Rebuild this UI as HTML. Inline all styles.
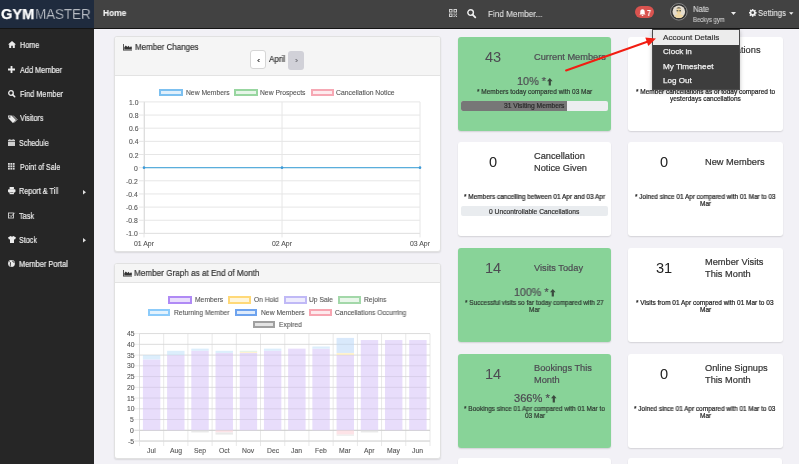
<!DOCTYPE html>
<html><head><meta charset="utf-8">
<style>
*{box-sizing:border-box;margin:0;padding:0}
html,body{width:799px;height:464px;overflow:hidden}
body{position:relative;background:#f2f1f6;font-family:"Liberation Sans",sans-serif;color:#333}
.abs{position:absolute}
.t{position:absolute;white-space:nowrap;line-height:1;transform-origin:0 0;will-change:transform;-webkit-text-stroke:0.2px currentColor}
svg{position:absolute;overflow:visible}
</style></head><body>

<div class="abs" style="left:0px;top:0px;width:799px;height:28px;background:#424242;"></div>
<div class="abs" style="left:0px;top:28px;width:799px;height:1px;background:#141414;"></div>
<div class="abs" style="left:0px;top:0px;width:94px;height:28px;background:#1f2b3e;"></div>
<div class="t" style="left:1.00px;top:5.70px;font-size:15.0px;color:#ffffff;font-weight:bold;transform:scaleX(0.972);-webkit-text-stroke:0.25px #fff;">GYM</div>
<div class="t" style="left:35.20px;top:5.70px;font-size:15.0px;color:#e6e8ec;transform:scaleX(0.890);-webkit-text-stroke:0.4px #1f2b3e;">MASTER</div>
<div class="t" style="left:102.50px;top:8.68px;font-size:9.0px;color:#f4f4f4;font-weight:bold;transform:scaleX(0.932);-webkit-text-stroke:0.1px currentColor;">Home</div>
<svg style="left:449px;top:9px" width="8" height="8" viewBox="0 0 8 8"><g fill="#d0d0d0"><path d="M0 0h3.5v3.5H0z M1 1v1.5h1.5V1z"/><path d="M4.5 0H8v3.5H4.5z M5.5 1v1.5H7V1z"/><path d="M0 4.5h3.5V8H0z M1 5.5V7h1.5V5.5z"/><rect x="4.5" y="4.5" width="1.2" height="1.2"/><rect x="6.8" y="4.5" width="1.2" height="1.2"/><rect x="5.7" y="5.7" width="1.1" height="1.1"/><rect x="4.5" y="6.8" width="1.2" height="1.2"/><rect x="6.8" y="6.8" width="1.2" height="1.2"/></g></svg>
<svg style="left:466.5px;top:9px" width="9" height="9" viewBox="0 0 9 9"><circle cx="3.6" cy="3.6" r="2.8" fill="none" stroke="#f0f0f0" stroke-width="1.4"/><path d="M5.6 5.6L8.3 8.3" stroke="#f0f0f0" stroke-width="1.8" stroke-linecap="round"/></svg>
<div class="t" style="left:487.60px;top:10.18px;font-size:9.0px;color:#e2e2e2;transform:scaleX(0.906);-webkit-text-stroke:0.1px currentColor;">Find Member...</div>
<div class="abs" style="left:635px;top:6.2px;width:19px;height:12.2px;background:#d9534f;border-radius:6.1px;"></div>
<svg style="left:638.5px;top:8.8px" width="7" height="7" viewBox="0 0 7 7"><path d="M3.5 0.3C2 0.3 1.3 1.5 1.3 2.8V4.4L0.4 5.6H6.6L5.7 4.4V2.8C5.7 1.5 5 0.3 3.5 0.3z M2.6 6.1a0.9 0.9 0 0 0 1.8 0z" fill="#fff"/></svg>
<div class="t" style="left:646.90px;top:8.97px;font-size:8.3px;color:#ffffff;font-weight:bold;transform:scaleX(0.845);-webkit-text-stroke:0.1px currentColor;">7</div>
<svg style="left:670px;top:3px" width="18" height="18" viewBox="0 0 18 18"><circle cx="8.8" cy="8.8" r="8.3" fill="#333" stroke="#8e8e8e" stroke-width="0.9"/><circle cx="8.8" cy="8.8" r="6.3" fill="#e4ddd0"/><clipPath id="av"><circle cx="8.8" cy="8.8" r="6.3"/></clipPath><g clip-path="url(#av)"><path d="M3.5 16 Q4 11.2 8.8 11 Q13.6 11.2 14.1 16z" fill="#f0d8a4"/><ellipse cx="8.8" cy="8" rx="2.4" ry="3" fill="#efd49c"/><path d="M6.3 6.8 Q6.4 4.2 8.8 4.1 Q11.2 4.2 11.3 6.8 L10.6 5.6 Q8.8 5.2 7 5.6z" fill="#6f6a5c"/><rect x="6.6" y="7.2" width="1.7" height="1.1" fill="#3e4a4a"/><rect x="9.3" y="7.2" width="1.7" height="1.1" fill="#3e4a4a"/></g></svg>
<div class="t" style="left:692.90px;top:4.72px;font-size:8.6px;color:#dcdcdc;transform:scaleX(0.892);-webkit-text-stroke:0.1px currentColor;">Nate</div>
<div class="t" style="left:692.90px;top:17.41px;font-size:6.6px;color:#cfcfcf;transform:scaleX(0.891);-webkit-text-stroke:0.1px currentColor;">Beckys gym</div>
<svg style="left:730.5px;top:12.2px" width="5" height="3" viewBox="0 0 5 3"><path d="M0 0H5L2.5 3z" fill="#eee"/></svg>
<svg style="left:748.6px;top:8.7px" width="7.4" height="7.4" viewBox="0 0 16 16"><path fill="#f0f0f0" d="M6.6 0h2.8l.4 2.2 1.3.6 1.9-1.3 2 2-1.3 1.9.6 1.3 2.2.4v2.8l-2.2.4-.6 1.3 1.3 1.9-2 2-1.9-1.3-1.3.6-.4 2.2H6.6l-.4-2.2-1.3-.6-1.9 1.3-2-2 1.3-1.9-.6-1.3L0 9.4V6.6l2.2-.4.6-1.3L1.5 3l2-2 1.9 1.3 1.3-.6z M8 5a3 3 0 1 0 0 6a3 3 0 1 0 0-6z"/></svg>
<div class="t" style="left:758.20px;top:7.84px;font-size:9.4px;color:#e8e8e8;transform:scaleX(0.824);-webkit-text-stroke:0.1px currentColor;">Settings</div>
<svg style="left:789.3px;top:12.1px" width="4.5" height="3" viewBox="0 0 5 3"><path d="M0 0H5L2.5 3z" fill="#eee"/></svg>
<div class="abs" style="left:0px;top:29px;width:94px;height:435px;background:#262626;"></div>
<div class="t" style="left:19.70px;top:41.43px;font-size:8.7px;color:#ededed;transform:scaleX(0.836);-webkit-text-stroke:0.2px currentColor;">Home</div>
<div class="t" style="left:19.70px;top:65.73px;font-size:8.7px;color:#ededed;transform:scaleX(0.845);-webkit-text-stroke:0.2px currentColor;">Add Member</div>
<div class="t" style="left:19.70px;top:90.03px;font-size:8.7px;color:#ededed;transform:scaleX(0.841);-webkit-text-stroke:0.2px currentColor;">Find Member</div>
<div class="t" style="left:19.70px;top:114.33px;font-size:8.7px;color:#ededed;transform:scaleX(0.829);-webkit-text-stroke:0.2px currentColor;">Visitors</div>
<div class="t" style="left:18.60px;top:138.63px;font-size:8.7px;color:#ededed;transform:scaleX(0.819);-webkit-text-stroke:0.2px currentColor;">Schedule</div>
<div class="t" style="left:19.70px;top:162.93px;font-size:8.7px;color:#ededed;transform:scaleX(0.817);-webkit-text-stroke:0.2px currentColor;">Point of Sale</div>
<div class="t" style="left:18.60px;top:187.23px;font-size:8.7px;color:#ededed;transform:scaleX(0.834);-webkit-text-stroke:0.2px currentColor;">Report &amp; Till</div>
<div class="t" style="left:18.60px;top:211.53px;font-size:8.7px;color:#ededed;transform:scaleX(0.844);-webkit-text-stroke:0.2px currentColor;">Task</div>
<div class="t" style="left:18.60px;top:235.83px;font-size:8.7px;color:#ededed;transform:scaleX(0.823);-webkit-text-stroke:0.2px currentColor;">Stock</div>
<div class="t" style="left:18.60px;top:260.13px;font-size:8.7px;color:#ededed;transform:scaleX(0.857);-webkit-text-stroke:0.2px currentColor;">Member Portal</div>
<svg style="left:8px;top:40.8px" width="8" height="7" viewBox="0 0 8 7"><path d="M4 0L0 3.6H1.2V7H3.2V4.8H4.8V7H6.8V3.6H8z" fill="#ececec"/></svg>
<svg style="left:8px;top:65.7px" width="7" height="7" viewBox="0 0 7 7"><path d="M2.6 0h1.8v2.6H7v1.8H4.4V7H2.6V4.4H0V2.6h2.6z" fill="#ececec"/></svg>
<svg style="left:8px;top:90.3px" width="7.2" height="7" viewBox="0 0 7.2 7"><circle cx="3" cy="3" r="2.3" fill="none" stroke="#ececec" stroke-width="1.3"/><path d="M4.6 4.6L6.7 6.7" stroke="#ececec" stroke-width="1.6" stroke-linecap="round"/></svg>
<svg style="left:8px;top:114.5px" width="9" height="8" viewBox="0 0 9 8"><path d="M0 0.5h3.6L8 4.9 4.9 8 0.5 3.6z" fill="#ececec"/><circle cx="1.8" cy="1.9" r=".7" fill="#262626"/><path d="M5 0.5L9 4.5 6 7.6" stroke="#ececec" stroke-width=".8" fill="none"/></svg>
<svg style="left:8px;top:138.7px" width="7" height="7" viewBox="0 0 7 7"><rect x="0" y="0.8" width="7" height="6.2" fill="#cfcfcf"/><rect x="0" y="2.4" width="7" height=".6" fill="#262626"/><rect x="1.4" y="0" width=".9" height="1.6" fill="#cfcfcf"/><rect x="4.7" y="0" width=".9" height="1.6" fill="#cfcfcf"/></svg>
<svg style="left:8px;top:163px" width="6.8" height="7" viewBox="0 0 6.8 7"><rect x="0.0" y="0.0" width="1.8" height="1.8" fill="#dcdcdc"/><rect x="2.4" y="0.0" width="1.8" height="1.8" fill="#dcdcdc"/><rect x="4.8" y="0.0" width="1.8" height="1.8" fill="#dcdcdc"/><rect x="0.0" y="2.4" width="1.8" height="1.8" fill="#dcdcdc"/><rect x="2.4" y="2.4" width="1.8" height="1.8" fill="#dcdcdc"/><rect x="4.8" y="2.4" width="1.8" height="1.8" fill="#dcdcdc"/><rect x="0.0" y="4.8" width="1.8" height="1.8" fill="#dcdcdc"/><rect x="2.4" y="4.8" width="1.8" height="1.8" fill="#dcdcdc"/><rect x="4.8" y="4.8" width="1.8" height="1.8" fill="#dcdcdc"/></svg>
<svg style="left:8px;top:187.3px" width="7.5" height="7.2" viewBox="0 0 7.5 7.2"><rect x="1.6" y="0" width="4.3" height="2.4" fill="#ececec"/><rect x="0" y="2.2" width="7.5" height="3.2" rx=".8" fill="#ececec"/><rect x="1.6" y="4.6" width="4.3" height="2.6" fill="#ececec"/><rect x="2.2" y="5.4" width="3.1" height=".5" fill="#262626"/></svg>
<svg style="left:8px;top:212px" width="7" height="6.5" viewBox="0 0 7 6.5"><rect x=".5" y="1" width="5" height="5" fill="none" stroke="#d4d4d4" stroke-width=".9"/><path d="M1.8 3.3L3.1 4.6 6.6 0.8" stroke="#d4d4d4" stroke-width="1" fill="none"/></svg>
<svg style="left:8px;top:236px" width="8" height="7" viewBox="0 0 8 7"><path d="M2.6 0L0 1.6 1 3.6 2 3.2V7H6V3.2L7 3.6 8 1.6 5.4 0Q4 1.2 2.6 0z" fill="#ececec"/></svg>
<svg style="left:8px;top:260.2px" width="7" height="7" viewBox="0 0 7 7"><circle cx="3.5" cy="3.5" r="3.4" fill="#ececec"/><path d="M1.5 1.5Q3 2.6 2.4 4 1.8 5 2.8 6.6 M4.2 0.6Q5 2.2 6.4 2.6" stroke="#262626" stroke-width=".9" fill="none"/></svg>
<svg style="left:82.5px;top:189.60000000000002px" width="3" height="4.4" viewBox="0 0 3 4.4"><path d="M0 0L3 2.2 0 4.4z" fill="#e0e0e0"/></svg>
<svg style="left:82.5px;top:238.20000000000002px" width="3" height="4.4" viewBox="0 0 3 4.4"><path d="M0 0L3 2.2 0 4.4z" fill="#e0e0e0"/></svg>
<div class="abs" style="left:114px;top:36px;width:327px;height:216px;background:#fff;border:1px solid #e1e1e1;border-radius:3px;box-shadow:0 1px 1.5px rgba(0,0,0,.10)"></div>
<div class="abs" style="left:115px;top:37px;width:325px;height:39px;background:#f5f5f5;border-bottom:1px solid #e3e3e3;border-radius:2px 2px 0 0"></div>
<svg style="left:123.2px;top:43.8px" width="9" height="6.5" viewBox="0 0 9 6.5"><path d="M0 0V6.5H9V5.8H0.8V0z" fill="#333"/><path d="M1.3 5.6V3.2L2.8 1.4 4.4 3 5.6 1.8 6.8 3.4 8 2.2 8.8 3V5.6z" fill="#333"/></svg>
<div class="t" style="left:134.50px;top:42.68px;font-size:9.0px;color:#333;transform:scaleX(0.888);">Member Changes</div>
<div class="abs" style="left:250.3px;top:50.4px;width:16.2px;height:19px;background:#fff;border:1px solid #d6d6d6;border-radius:3px;"></div>
<div class="t" style="left:256.90px;top:56.83px;font-size:8.0px;color:#444;transform:scaleX(1.201);">‹</div>
<div class="t" style="left:269.20px;top:55.48px;font-size:9.0px;color:#333;transform:scaleX(0.900);">April</div>
<div class="abs" style="left:287.9px;top:50.8px;width:16.6px;height:18.9px;background:#d1d1d8;border-radius:3px;"></div>
<div class="t" style="left:294.60px;top:56.83px;font-size:8.0px;color:#77777d;transform:scaleX(1.201);">›</div>
<div class="abs" style="left:159px;top:89px;width:23.5px;height:7.2px;background:#e0effb;border:2px solid #7cc0f0"></div>
<div class="t" style="left:185.50px;top:89.78px;font-size:6.75px;color:#555;-webkit-text-stroke:0.1px currentColor;">New Members</div>
<div class="abs" style="left:234px;top:89px;width:23.5px;height:7.2px;background:#e6f5e8;border:2px solid #98d6a0"></div>
<div class="t" style="left:259.50px;top:89.78px;font-size:6.75px;color:#555;-webkit-text-stroke:0.1px currentColor;">New Prospects</div>
<div class="abs" style="left:310.5px;top:89px;width:23.5px;height:7.2px;background:#fdebee;border:2px solid #f6a8b4"></div>
<div class="t" style="left:336.20px;top:89.78px;font-size:6.75px;color:#555;transform:scaleX(1.008);-webkit-text-stroke:0.1px currentColor;">Cancellation Notice</div>
<svg style="left:0;top:0" width="799" height="464"><line x1="139" y1="101.90" x2="420" y2="101.90" stroke="#e6e6e6" stroke-width="1"/><line x1="139" y1="115.05" x2="420" y2="115.05" stroke="#e6e6e6" stroke-width="1"/><line x1="139" y1="128.20" x2="420" y2="128.20" stroke="#e6e6e6" stroke-width="1"/><line x1="139" y1="141.35" x2="420" y2="141.35" stroke="#e6e6e6" stroke-width="1"/><line x1="139" y1="154.50" x2="420" y2="154.50" stroke="#e6e6e6" stroke-width="1"/><line x1="139" y1="167.65" x2="420" y2="167.65" stroke="#e6e6e6" stroke-width="1"/><line x1="139" y1="180.80" x2="420" y2="180.80" stroke="#e6e6e6" stroke-width="1"/><line x1="139" y1="193.95" x2="420" y2="193.95" stroke="#e6e6e6" stroke-width="1"/><line x1="139" y1="207.10" x2="420" y2="207.10" stroke="#e6e6e6" stroke-width="1"/><line x1="139" y1="220.25" x2="420" y2="220.25" stroke="#e6e6e6" stroke-width="1"/><line x1="139" y1="233.40" x2="420" y2="233.40" stroke="#e6e6e6" stroke-width="1"/><line x1="144" y1="101.90" x2="144" y2="237.40" stroke="#e6e6e6" stroke-width="1"/><line x1="282" y1="101.90" x2="282" y2="237.40" stroke="#e6e6e6" stroke-width="1"/><line x1="420" y1="101.90" x2="420" y2="237.40" stroke="#e6e6e6" stroke-width="1"/><line x1="144.5" y1="101.90" x2="144.5" y2="233.40" stroke="#dedede" stroke-width="1"/><line x1="139" y1="233.40" x2="420" y2="233.40" stroke="#e2e2e2" stroke-width="1"/><line x1="144" y1="167.65" x2="420" y2="167.65" stroke="#5aaedc" stroke-width="1.3"/><circle cx="144" cy="167.65" r="1.3" fill="#3d9ad8"/><circle cx="282" cy="167.65" r="1.3" fill="#3d9ad8"/><circle cx="420" cy="167.65" r="1.3" fill="#3d9ad8"/></svg>
<div class="t" style="left:128.75px;top:99.94px;font-size:6.8px;color:#555;-webkit-text-stroke:0.1px currentColor;">1.0</div>
<div class="t" style="left:128.75px;top:113.09px;font-size:6.8px;color:#555;-webkit-text-stroke:0.1px currentColor;">0.8</div>
<div class="t" style="left:128.75px;top:126.24px;font-size:6.8px;color:#555;-webkit-text-stroke:0.1px currentColor;">0.6</div>
<div class="t" style="left:128.75px;top:139.39px;font-size:6.8px;color:#555;-webkit-text-stroke:0.1px currentColor;">0.4</div>
<div class="t" style="left:128.75px;top:152.54px;font-size:6.8px;color:#555;-webkit-text-stroke:0.1px currentColor;">0.2</div>
<div class="t" style="left:134.42px;top:165.69px;font-size:6.8px;color:#555;-webkit-text-stroke:0.1px currentColor;">0</div>
<div class="t" style="left:126.48px;top:178.84px;font-size:6.8px;color:#555;-webkit-text-stroke:0.1px currentColor;">-0.2</div>
<div class="t" style="left:126.48px;top:191.99px;font-size:6.8px;color:#555;-webkit-text-stroke:0.1px currentColor;">-0.4</div>
<div class="t" style="left:126.48px;top:205.14px;font-size:6.8px;color:#555;-webkit-text-stroke:0.1px currentColor;">-0.6</div>
<div class="t" style="left:126.48px;top:218.29px;font-size:6.8px;color:#555;-webkit-text-stroke:0.1px currentColor;">-0.8</div>
<div class="t" style="left:126.48px;top:231.44px;font-size:6.8px;color:#555;-webkit-text-stroke:0.1px currentColor;">-1.0</div>
<div class="t" style="left:134.00px;top:240.84px;font-size:6.8px;color:#555;transform:scaleX(1.017);-webkit-text-stroke:0.1px currentColor;">01 Apr</div>
<div class="t" style="left:272.00px;top:240.84px;font-size:6.8px;color:#555;transform:scaleX(1.017);-webkit-text-stroke:0.1px currentColor;">02 Apr</div>
<div class="t" style="left:410.00px;top:240.84px;font-size:6.8px;color:#555;transform:scaleX(1.017);-webkit-text-stroke:0.1px currentColor;">03 Apr</div>
<div class="abs" style="left:114px;top:262.5px;width:327px;height:196px;background:#fff;border:1px solid #e1e1e1;border-radius:3px;box-shadow:0 1px 1.5px rgba(0,0,0,.10)"></div>
<div class="abs" style="left:115px;top:263.5px;width:325px;height:19.5px;background:#f5f5f5;border-bottom:1px solid #e3e3e3;border-radius:2px 2px 0 0"></div>
<svg style="left:123.2px;top:270.0px" width="9" height="6.5" viewBox="0 0 9 6.5"><path d="M0 0V6.5H9V5.8H0.8V0z" fill="#333"/><path d="M1.3 5.6V3.2L2.8 1.4 4.4 3 5.6 1.8 6.8 3.4 8 2.2 8.8 3V5.6z" fill="#333"/></svg>
<div class="t" style="left:134.40px;top:268.68px;font-size:9.0px;color:#333;transform:scaleX(0.906);">Member Graph as at End of Month</div>
<div class="abs" style="left:168px;top:296.4px;width:23.5px;height:7.2px;background:#e9defc;border:2px solid #b08af5"></div>
<div class="t" style="left:194.50px;top:297.28px;font-size:6.75px;color:#555;-webkit-text-stroke:0.1px currentColor;">Members</div>
<div class="abs" style="left:227.7px;top:296.4px;width:23.30000000000001px;height:7.2px;background:#fff6dc;border:2px solid #ffd978"></div>
<div class="t" style="left:253.60px;top:297.28px;font-size:6.75px;color:#555;transform:scaleX(0.981);-webkit-text-stroke:0.1px currentColor;">On Hold</div>
<div class="abs" style="left:283.8px;top:296.4px;width:23.399999999999977px;height:7.2px;background:#eeecfd;border:2px solid #c0b9f6"></div>
<div class="t" style="left:309.40px;top:297.28px;font-size:6.75px;color:#555;transform:scaleX(0.991);-webkit-text-stroke:0.1px currentColor;">Up Sale</div>
<div class="abs" style="left:338.3px;top:296.4px;width:22.599999999999966px;height:7.2px;background:#e9f6ea;border:2px solid #a3d8a9"></div>
<div class="t" style="left:363.80px;top:297.28px;font-size:6.75px;color:#555;transform:scaleX(0.986);-webkit-text-stroke:0.1px currentColor;">Rejoins</div>
<div class="abs" style="left:148px;top:308.7px;width:22.19999999999999px;height:7.2px;background:#e3f2fd;border:2px solid #8ccbfa"></div>
<div class="t" style="left:173.60px;top:309.58px;font-size:6.75px;color:#555;transform:scaleX(0.991);-webkit-text-stroke:0.1px currentColor;">Returning Member</div>
<div class="abs" style="left:235.3px;top:308.7px;width:22.099999999999966px;height:7.2px;background:#dfebfb;border:2px solid #6ea3ee"></div>
<div class="t" style="left:260.90px;top:309.58px;font-size:6.75px;color:#555;-webkit-text-stroke:0.1px currentColor;">New Members</div>
<div class="abs" style="left:309.4px;top:308.7px;width:22.600000000000023px;height:7.2px;background:#fde9ec;border:2px solid #f7a5b1"></div>
<div class="t" style="left:335.30px;top:309.58px;font-size:6.75px;color:#555;transform:scaleX(0.992);-webkit-text-stroke:0.1px currentColor;">Cancellations Occurring</div>
<div class="abs" style="left:253.2px;top:320.7px;width:22.1px;height:7.2px;background:#e4e4e4;border:2px solid #a0a0a0"></div>
<div class="t" style="left:278.70px;top:321.58px;font-size:6.75px;color:#555;transform:scaleX(0.987);-webkit-text-stroke:0.1px currentColor;">Expired</div>
<svg style="left:0;top:0" width="799" height="464"><line x1="134.5" y1="333.60" x2="430" y2="333.60" stroke="#ececec" stroke-width="1"/><line x1="134.5" y1="344.34" x2="430" y2="344.34" stroke="#ececec" stroke-width="1"/><line x1="134.5" y1="355.09" x2="430" y2="355.09" stroke="#ececec" stroke-width="1"/><line x1="134.5" y1="365.83" x2="430" y2="365.83" stroke="#ececec" stroke-width="1"/><line x1="134.5" y1="376.57" x2="430" y2="376.57" stroke="#ececec" stroke-width="1"/><line x1="134.5" y1="387.32" x2="430" y2="387.32" stroke="#ececec" stroke-width="1"/><line x1="134.5" y1="398.06" x2="430" y2="398.06" stroke="#ececec" stroke-width="1"/><line x1="134.5" y1="408.81" x2="430" y2="408.81" stroke="#ececec" stroke-width="1"/><line x1="134.5" y1="419.56" x2="430" y2="419.56" stroke="#ececec" stroke-width="1"/><line x1="134.5" y1="430.30" x2="430" y2="430.30" stroke="#ececec" stroke-width="1"/><line x1="134.5" y1="441.05" x2="430" y2="441.05" stroke="#ececec" stroke-width="1"/><line x1="139.50" y1="333.60" x2="139.50" y2="446.05" stroke="#e8e8e8" stroke-width="1"/><line x1="163.71" y1="333.60" x2="163.71" y2="446.05" stroke="#e8e8e8" stroke-width="1"/><line x1="187.92" y1="333.60" x2="187.92" y2="446.05" stroke="#e8e8e8" stroke-width="1"/><line x1="212.12" y1="333.60" x2="212.12" y2="446.05" stroke="#e8e8e8" stroke-width="1"/><line x1="236.33" y1="333.60" x2="236.33" y2="446.05" stroke="#e8e8e8" stroke-width="1"/><line x1="260.54" y1="333.60" x2="260.54" y2="446.05" stroke="#e8e8e8" stroke-width="1"/><line x1="284.75" y1="333.60" x2="284.75" y2="446.05" stroke="#e8e8e8" stroke-width="1"/><line x1="308.96" y1="333.60" x2="308.96" y2="446.05" stroke="#e8e8e8" stroke-width="1"/><line x1="333.17" y1="333.60" x2="333.17" y2="446.05" stroke="#e8e8e8" stroke-width="1"/><line x1="357.38" y1="333.60" x2="357.38" y2="446.05" stroke="#e8e8e8" stroke-width="1"/><line x1="381.58" y1="333.60" x2="381.58" y2="446.05" stroke="#e8e8e8" stroke-width="1"/><line x1="405.79" y1="333.60" x2="405.79" y2="446.05" stroke="#e8e8e8" stroke-width="1"/><line x1="430.00" y1="333.60" x2="430.00" y2="446.05" stroke="#e8e8e8" stroke-width="1"/><line x1="139.5" y1="333.60" x2="139.5" y2="441.05" stroke="#dedede" stroke-width="1"/><line x1="134.5" y1="441.05" x2="430" y2="441.05" stroke="#e4e4e4" stroke-width="1"/><line x1="134.5" y1="430.30" x2="430" y2="430.30" stroke="#dcdcdc" stroke-width="1"/><rect x="142.89" y="359.38" width="17.43" height="70.92" fill="#e8ddfb"/><rect x="142.89" y="355.09" width="17.43" height="4.30" fill="#dceefc"/><rect x="167.10" y="355.09" width="17.43" height="75.21" fill="#e8ddfb"/><rect x="167.10" y="350.79" width="17.43" height="4.30" fill="#dceefc"/><rect x="191.31" y="350.79" width="17.43" height="79.51" fill="#e8ddfb"/><rect x="191.31" y="348.64" width="17.43" height="2.15" fill="#dceefc"/><rect x="191.31" y="430.30" width="17.43" height="2.15" fill="#e9e9e9"/><rect x="215.51" y="352.94" width="17.43" height="77.36" fill="#e8ddfb"/><rect x="215.51" y="350.79" width="17.43" height="2.15" fill="#dceefc"/><rect x="215.51" y="430.30" width="17.43" height="2.15" fill="#fde3e7"/><rect x="215.51" y="432.45" width="17.43" height="2.15" fill="#e9e9e9"/><rect x="239.72" y="352.94" width="17.43" height="77.36" fill="#e8ddfb"/><rect x="239.72" y="351.86" width="17.43" height="1.07" fill="#fff3cf"/><rect x="239.72" y="350.79" width="17.43" height="1.07" fill="#e3f3e4"/><rect x="263.93" y="350.79" width="17.43" height="79.51" fill="#e8ddfb"/><rect x="263.93" y="348.64" width="17.43" height="2.15" fill="#dceefc"/><rect x="288.14" y="348.64" width="17.43" height="81.66" fill="#e8ddfb"/><rect x="312.35" y="348.64" width="17.43" height="81.66" fill="#e8ddfb"/><rect x="312.35" y="346.49" width="17.43" height="2.15" fill="#dceefc"/><rect x="336.56" y="355.09" width="17.43" height="75.21" fill="#e8ddfb"/><rect x="336.56" y="352.94" width="17.43" height="2.15" fill="#fff3cf"/><rect x="336.56" y="337.89" width="17.43" height="15.04" fill="#d9e9fb"/><rect x="336.56" y="430.30" width="17.43" height="4.30" fill="#fde3e7"/><rect x="336.56" y="434.60" width="17.43" height="1.07" fill="#e9e9e9"/><rect x="360.76" y="340.04" width="17.43" height="90.26" fill="#e8ddfb"/><rect x="360.76" y="430.30" width="17.43" height="2.15" fill="#e9e9e9"/><rect x="384.97" y="340.04" width="17.43" height="90.26" fill="#e8ddfb"/><rect x="409.18" y="340.04" width="17.43" height="90.26" fill="#e8ddfb"/><line x1="139.5" y1="333.60" x2="430" y2="333.60" stroke="rgba(0,0,0,.07)" stroke-width="1"/><line x1="139.5" y1="344.34" x2="430" y2="344.34" stroke="rgba(0,0,0,.07)" stroke-width="1"/><line x1="139.5" y1="355.09" x2="430" y2="355.09" stroke="rgba(0,0,0,.07)" stroke-width="1"/><line x1="139.5" y1="365.83" x2="430" y2="365.83" stroke="rgba(0,0,0,.07)" stroke-width="1"/><line x1="139.5" y1="376.57" x2="430" y2="376.57" stroke="rgba(0,0,0,.07)" stroke-width="1"/><line x1="139.5" y1="387.32" x2="430" y2="387.32" stroke="rgba(0,0,0,.07)" stroke-width="1"/><line x1="139.5" y1="398.06" x2="430" y2="398.06" stroke="rgba(0,0,0,.07)" stroke-width="1"/><line x1="139.5" y1="408.81" x2="430" y2="408.81" stroke="rgba(0,0,0,.07)" stroke-width="1"/><line x1="139.5" y1="419.56" x2="430" y2="419.56" stroke="rgba(0,0,0,.07)" stroke-width="1"/><line x1="139.5" y1="430.30" x2="430" y2="430.30" stroke="rgba(0,0,0,.07)" stroke-width="1"/><line x1="139.5" y1="441.05" x2="430" y2="441.05" stroke="rgba(0,0,0,.07)" stroke-width="1"/></svg>
<div class="t" style="left:126.64px;top:331.24px;font-size:6.8px;color:#555;-webkit-text-stroke:0.1px currentColor;">45</div>
<div class="t" style="left:126.64px;top:341.98px;font-size:6.8px;color:#555;-webkit-text-stroke:0.1px currentColor;">40</div>
<div class="t" style="left:126.64px;top:352.73px;font-size:6.8px;color:#555;-webkit-text-stroke:0.1px currentColor;">35</div>
<div class="t" style="left:126.64px;top:363.47px;font-size:6.8px;color:#555;-webkit-text-stroke:0.1px currentColor;">30</div>
<div class="t" style="left:126.64px;top:374.22px;font-size:6.8px;color:#555;-webkit-text-stroke:0.1px currentColor;">25</div>
<div class="t" style="left:126.64px;top:384.96px;font-size:6.8px;color:#555;-webkit-text-stroke:0.1px currentColor;">20</div>
<div class="t" style="left:126.64px;top:395.71px;font-size:6.8px;color:#555;-webkit-text-stroke:0.1px currentColor;">15</div>
<div class="t" style="left:126.64px;top:406.45px;font-size:6.8px;color:#555;-webkit-text-stroke:0.1px currentColor;">10</div>
<div class="t" style="left:130.42px;top:417.20px;font-size:6.8px;color:#555;-webkit-text-stroke:0.1px currentColor;">5</div>
<div class="t" style="left:130.42px;top:427.94px;font-size:6.8px;color:#555;-webkit-text-stroke:0.1px currentColor;">0</div>
<div class="t" style="left:128.15px;top:438.69px;font-size:6.8px;color:#555;-webkit-text-stroke:0.1px currentColor;">-5</div>
<div class="t" style="left:147.26px;top:448.14px;font-size:6.8px;color:#555;-webkit-text-stroke:0.1px currentColor;">Jul</div>
<div class="t" style="left:169.76px;top:448.14px;font-size:6.8px;color:#555;-webkit-text-stroke:0.1px currentColor;">Aug</div>
<div class="t" style="left:193.97px;top:448.14px;font-size:6.8px;color:#555;-webkit-text-stroke:0.1px currentColor;">Sep</div>
<div class="t" style="left:218.94px;top:448.14px;font-size:6.8px;color:#555;-webkit-text-stroke:0.1px currentColor;">Oct</div>
<div class="t" style="left:242.39px;top:448.14px;font-size:6.8px;color:#555;-webkit-text-stroke:0.1px currentColor;">Nov</div>
<div class="t" style="left:266.60px;top:448.14px;font-size:6.8px;color:#555;-webkit-text-stroke:0.1px currentColor;">Dec</div>
<div class="t" style="left:291.37px;top:448.14px;font-size:6.8px;color:#555;-webkit-text-stroke:0.1px currentColor;">Jan</div>
<div class="t" style="left:315.20px;top:448.14px;font-size:6.8px;color:#555;-webkit-text-stroke:0.1px currentColor;">Feb</div>
<div class="t" style="left:339.42px;top:448.14px;font-size:6.8px;color:#555;-webkit-text-stroke:0.1px currentColor;">Mar</div>
<div class="t" style="left:364.19px;top:448.14px;font-size:6.8px;color:#555;-webkit-text-stroke:0.1px currentColor;">Apr</div>
<div class="t" style="left:387.26px;top:448.14px;font-size:6.8px;color:#555;-webkit-text-stroke:0.1px currentColor;">May</div>
<div class="t" style="left:412.41px;top:448.14px;font-size:6.8px;color:#555;-webkit-text-stroke:0.1px currentColor;">Jun</div>
<div class="abs" style="left:458px;top:37px;width:153px;height:94px;background:#88d398;border-radius:3px;box-shadow:0 1px 1.5px rgba(0,0,0,.13)"></div>
<div class="t" style="left:484.88px;top:49.64px;font-size:14.6px;color:#4d4a52;-webkit-text-stroke:0;">43</div>
<div class="t" style="left:534.20px;top:52.77px;font-size:9.25px;color:#4d4a52;">Current Members</div>
<div class="t" style="left:517.05px;top:76.29px;font-size:11px;color:#4d4a52;transform:scaleX(0.988);">10% *</div>
<svg style="left:547.25px;top:77.8px" width="5.6" height="7.4" viewBox="0 0 5.6 7.4"><path d="M2.8 0L5.6 3.3H3.9V7.4H1.7V3.3H0z" fill="#3a4a3e"/></svg>
<div class="t" style="left:477.30px;top:89.10px;font-size:6.5px;color:#2f3a32;">* Members today compared with 03 Mar</div>
<div class="abs" style="left:628.3px;top:37px;width:154.5px;height:94px;background:#fff;border-radius:3px;box-shadow:0 1px 1.5px rgba(0,0,0,.13)"></div>
<div class="t" style="left:660.04px;top:49.64px;font-size:14.6px;color:#222;-webkit-text-stroke:0;">0</div>
<div class="t" style="left:705.30px;top:45.87px;font-size:9.25px;color:#333;">Cancellations</div>
<div class="t" style="left:705.30px;top:58.67px;font-size:9.25px;color:#333;">Today</div>
<div class="t" style="left:635.75px;top:89.10px;font-size:6.5px;color:#222;">* Member cancellations as of today compared to</div>
<div class="t" style="left:669.79px;top:96.00px;font-size:6.5px;color:#222;">yesterdays cancellations</div>
<div class="abs" style="left:458px;top:142px;width:153px;height:94px;background:#fff;border-radius:3px;box-shadow:0 1px 1.5px rgba(0,0,0,.13)"></div>
<div class="t" style="left:488.94px;top:154.64px;font-size:14.6px;color:#222;-webkit-text-stroke:0;">0</div>
<div class="t" style="left:534.20px;top:151.97px;font-size:9.25px;color:#333;">Cancellation</div>
<div class="t" style="left:534.20px;top:163.67px;font-size:9.25px;color:#333;">Notice Given</div>
<div class="t" style="left:464.30px;top:194.10px;font-size:6.5px;color:#222;transform:scaleX(0.990);">* Members cancelling between 01 Apr and 03 Apr</div>
<div class="abs" style="left:628.3px;top:142px;width:154.5px;height:94px;background:#fff;border-radius:3px;box-shadow:0 1px 1.5px rgba(0,0,0,.13)"></div>
<div class="t" style="left:660.04px;top:154.64px;font-size:14.6px;color:#222;-webkit-text-stroke:0;">0</div>
<div class="t" style="left:705.30px;top:157.77px;font-size:9.25px;color:#333;">New Members</div>
<div class="t" style="left:634.80px;top:194.10px;font-size:6.5px;color:#222;transform:scaleX(0.980);">* Joined since 01 Apr compared with 01 Mar to 03</div>
<div class="t" style="left:699.61px;top:201.00px;font-size:6.5px;color:#222;transform:scaleX(0.980);">Mar</div>
<div class="abs" style="left:458px;top:248px;width:153px;height:94px;background:#88d398;border-radius:3px;box-shadow:0 1px 1.5px rgba(0,0,0,.13)"></div>
<div class="t" style="left:484.88px;top:260.64px;font-size:14.6px;color:#4d4a52;-webkit-text-stroke:0;">14</div>
<div class="t" style="left:534.20px;top:263.77px;font-size:9.25px;color:#4d4a52;">Visits Today</div>
<div class="t" style="left:514.30px;top:287.29px;font-size:11px;color:#4d4a52;transform:scaleX(0.973);">100% *</div>
<svg style="left:550.0px;top:288.8px" width="5.6" height="7.4" viewBox="0 0 5.6 7.4"><path d="M2.8 0L5.6 3.3H3.9V7.4H1.7V3.3H0z" fill="#3a4a3e"/></svg>
<div class="t" style="left:465.45px;top:300.10px;font-size:6.5px;color:#2f3a32;transform:scaleX(0.984);">* Successful visits so far today compared with 27</div>
<div class="t" style="left:529.29px;top:307.00px;font-size:6.5px;color:#2f3a32;transform:scaleX(0.984);">Mar</div>
<div class="abs" style="left:628.3px;top:248px;width:154.5px;height:94px;background:#fff;border-radius:3px;box-shadow:0 1px 1.5px rgba(0,0,0,.13)"></div>
<div class="t" style="left:655.98px;top:260.64px;font-size:14.6px;color:#222;-webkit-text-stroke:0;">31</div>
<div class="t" style="left:705.30px;top:257.97px;font-size:9.25px;color:#333;">Member Visits</div>
<div class="t" style="left:705.30px;top:269.67px;font-size:9.25px;color:#333;">This Month</div>
<div class="t" style="left:636.40px;top:300.10px;font-size:6.5px;color:#222;">* Visits from 01 Apr compared with 01 Mar to 03</div>
<div class="t" style="left:699.51px;top:307.00px;font-size:6.5px;color:#222;">Mar</div>
<div class="abs" style="left:458px;top:354px;width:153px;height:94px;background:#88d398;border-radius:3px;box-shadow:0 1px 1.5px rgba(0,0,0,.13)"></div>
<div class="t" style="left:484.88px;top:366.64px;font-size:14.6px;color:#4d4a52;-webkit-text-stroke:0;">14</div>
<div class="t" style="left:534.20px;top:363.97px;font-size:9.25px;color:#4d4a52;">Bookings This</div>
<div class="t" style="left:534.20px;top:375.67px;font-size:9.25px;color:#4d4a52;">Month</div>
<div class="t" style="left:513.65px;top:393.29px;font-size:11px;color:#4d4a52;transform:scaleX(1.009);">366% *</div>
<svg style="left:550.65px;top:394.8px" width="5.6" height="7.4" viewBox="0 0 5.6 7.4"><path d="M2.8 0L5.6 3.3H3.9V7.4H1.7V3.3H0z" fill="#3a4a3e"/></svg>
<div class="t" style="left:464.40px;top:406.10px;font-size:6.5px;color:#2f3a32;transform:scaleX(0.992);">* Bookings since 01 Apr compared with 01 Mar to</div>
<div class="t" style="left:524.77px;top:413.00px;font-size:6.5px;color:#2f3a32;transform:scaleX(0.992);">03 Mar</div>
<div class="abs" style="left:628.3px;top:354px;width:154.5px;height:94px;background:#fff;border-radius:3px;box-shadow:0 1px 1.5px rgba(0,0,0,.13)"></div>
<div class="t" style="left:660.04px;top:366.64px;font-size:14.6px;color:#222;-webkit-text-stroke:0;">0</div>
<div class="t" style="left:705.30px;top:363.97px;font-size:9.25px;color:#333;">Online Signups</div>
<div class="t" style="left:705.30px;top:375.67px;font-size:9.25px;color:#333;">This Month</div>
<div class="t" style="left:634.35px;top:406.10px;font-size:6.5px;color:#222;transform:scaleX(0.986);">* Joined since 01 Apr compared with 01 Mar to 03</div>
<div class="t" style="left:699.58px;top:413.00px;font-size:6.5px;color:#222;transform:scaleX(0.986);">Mar</div>
<div class="abs" style="left:460.7px;top:100.6px;width:147.2px;height:10px;background:#eceef0;border-radius:2px;"></div>
<div class="abs" style="left:460.7px;top:100.6px;width:106px;height:10px;background:#777777;border-radius:2px 0 0 2px;"></div>
<div class="t" style="left:504.00px;top:102.83px;font-size:6.7px;color:#2a2a2a;">31 Visiting Members</div>
<div class="abs" style="left:460.9px;top:206.4px;width:147.1px;height:9.6px;background:#e9ecef;border-radius:2px;"></div>
<div class="t" style="left:489.10px;top:208.63px;font-size:6.7px;color:#333;">0 Uncontrollable Cancellations</div>
<div class="abs" style="left:458px;top:458px;width:153px;height:94px;background:#fff;border-radius:3px;box-shadow:0 1px 1.5px rgba(0,0,0,.13)"></div>
<div class="abs" style="left:628.3px;top:458px;width:154px;height:94px;background:#fff;border-radius:3px;box-shadow:0 1px 1.5px rgba(0,0,0,.13)"></div>
<div class="abs" style="left:651.8px;top:29.2px;width:88.5px;height:61px;background:#3d3d3d;border:1px solid #4a4a4a;border-top:0;box-shadow:0 2px 4px rgba(0,0,0,.25)"></div>
<div class="abs" style="left:652.6px;top:30.2px;width:86.8px;height:14.5px;background:#ececec;"></div>
<div class="t" style="left:662.80px;top:33.84px;font-size:8.1px;color:#333;">Account Details</div>
<div class="t" style="left:662.80px;top:47.74px;font-size:8.1px;color:#f2f2f2;-webkit-text-stroke:0.25px currentColor;">Clock in</div>
<div class="t" style="left:662.80px;top:62.84px;font-size:8.1px;color:#f2f2f2;-webkit-text-stroke:0.25px currentColor;">My Timesheet</div>
<div class="t" style="left:662.80px;top:77.14px;font-size:8.1px;color:#f2f2f2;-webkit-text-stroke:0.25px currentColor;">Log Out</div>
<svg style="left:0;top:0" width="799" height="464"><line x1="566" y1="70.5" x2="648" y2="41.5" stroke="#f21d12" stroke-width="1.9" stroke-linecap="round"/><path d="M656 38.6L645.3 37.6L648.3 46z" fill="#f21d12"/></svg>
</body></html>
